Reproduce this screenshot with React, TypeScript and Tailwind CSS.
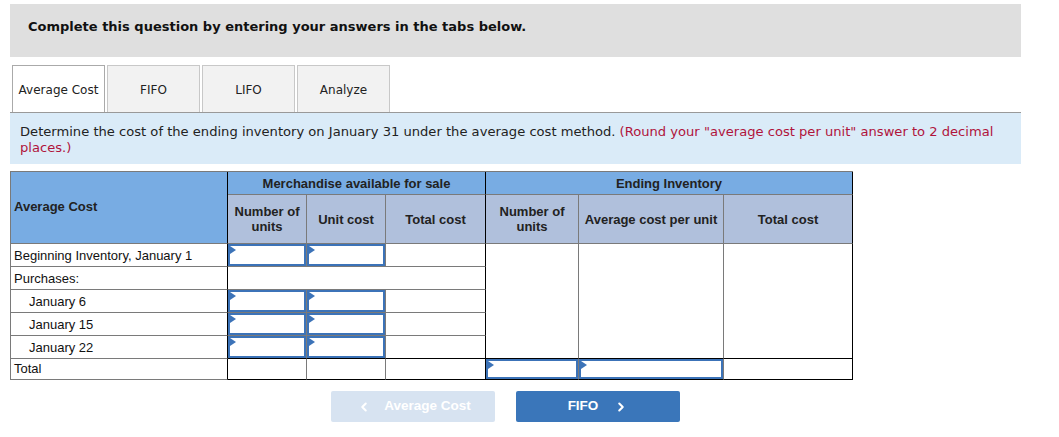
import { ChevronLeft, ChevronRight } from 'lucide-react';

const tabs = ['Average Cost', 'FIFO', 'LIFO', 'Analyze'];

const InputCell = ({ right = 'border-r-[#7a7a7a]', bottom = 'border-b-[#7a7a7a]' }: { right?: string; bottom?: string }) => (
  <div className={`border-r border-b ${right} ${bottom}`}>
    <div className="relative h-full border-2 border-[#3c73b8]">
      <svg className="absolute left-0 top-0" width="6" height="8" viewBox="0 0 6 8">
        <polygon points="0,0 6,4 0,8" fill="#3c73b8" />
      </svg>
    </div>
  </div>
);

export default function App() {
  const cell = 'border-r border-b border-[#7a7a7a]';
  const head = 'font-bold text-[#222] text-center flex items-center justify-center leading-[15px]';

  return (
    <div className="w-[1059px] h-[437px] bg-white px-[10px] pt-[4px] font-['Liberation_Sans',Arial,sans-serif]">
      {/* instructions */}
      <div className="h-[53px] w-[1011px] bg-[#dfdfdf] flex items-center pl-[18px] pb-[8px] font-['DejaVu_Sans',Verdana,sans-serif] text-[13px] font-bold text-[#111]">
        Complete this question by entering your answers in the tabs below.
      </div>

      {/* tabs */}
      <div className="mt-[8px] w-[1011px] flex gap-[2px] pl-[2px] border-b border-[#999] font-['DejaVu_Sans',Verdana,sans-serif] text-[12px] text-[#222]">
        {tabs.map((t, i) => (
          <div
            key={t}
            className={
              i === 0
                ? 'w-[93px] h-[47px] -mb-px pt-[2px] bg-white border border-b-0 border-[#aaa] flex items-center justify-center'
                : 'w-[93px] h-[47px] pt-[2px] bg-[#f2f2f2] border border-b-0 border-[#c8c8c8] flex items-center justify-center'
            }
          >
            {t}
          </div>
        ))}
      </div>

      <div className="w-[1011px] h-[51px] bg-[#daebf8] px-[10px] pt-[11px] font-['DejaVu_Sans',Verdana,sans-serif] text-[13.1px] leading-[16px] text-[#222]">
        Determine the cost of the ending inventory on January 31 under the average cost method.{' '}
        <span className="text-[#b0143c]">(Round your "average cost per unit" answer to 2 decimal places.)</span>
      </div>

      {/* table */}
      <div className="mt-[7px] w-[843px] grid grid-cols-[217px_79px_79px_100px_93px_145px_129px] grid-rows-[23px_49px_23px_23px_23px_23px_23px_21px] border-l border-t border-[#7a7a7a] text-[13px] text-[#111]">
        <div className="row-span-2 bg-[#78ace3] border-r border-b border-[#7a7a7a] border-r-black flex items-center pl-[3px] pb-[2px] font-bold text-[#222]">
          Average Cost
        </div>
        <div className={`col-span-3 bg-[#78ace3] ${cell} border-r-black ${head}`}>Merchandise available for sale</div>
        <div className={`col-span-3 bg-[#78ace3] ${cell} border-r-black ${head}`}>Ending Inventory</div>

        <div className={`bg-[#b0c0dc] ${cell} ${head}`}>Number of<br />units</div>
        <div className={`bg-[#b0c0dc] ${cell} ${head}`}>Unit cost</div>
        <div className={`bg-[#b0c0dc] ${cell} border-r-black ${head}`}>Total cost</div>
        <div className={`bg-[#b0c0dc] ${cell} ${head}`}>Number of<br />units</div>
        <div className={`bg-[#b0c0dc] ${cell} ${head}`}>Average cost per unit</div>
        <div className={`bg-[#b0c0dc] ${cell} border-r-black ${head}`}>Total cost</div>

        {/* Beginning inventory */}
        <div className={`${cell} border-r-black flex items-center pl-[3px] pt-[1px]`}>Beginning Inventory, January 1</div>
        <InputCell />
        <InputCell />
        <div className={`${cell} border-r-black`} />
        <div className={`row-span-5 ${cell} border-b-black`} />
        <div className={`row-span-5 ${cell} border-b-black`} />
        <div className={`row-span-5 ${cell} border-r-black border-b-black`} />

        {/* Purchases */}
        <div className={`${cell} border-r-black flex items-center pl-[3px] pt-[1px]`}>Purchases:</div>
        <div className={`col-span-3 ${cell} border-r-black`} />

        {['January 6', 'January 15', 'January 22'].map((d, i) => (
          <>
            <div key={d} className={`${cell} border-r-black flex items-center pl-[18px] pt-[1px]`}>{d}</div>
            <InputCell bottom={i === 2 ? 'border-b-black' : 'border-b-[#7a7a7a]'} />
            <InputCell bottom={i === 2 ? 'border-b-black' : 'border-b-[#7a7a7a]'} />
            <div className={`${cell} border-r-black ${i === 2 ? 'border-b-black' : ''}`} />
          </>
        ))}

        {/* Total */}
        <div className={`${cell} border-r-black flex items-center pl-[3px]`}>Total</div>
        <div className={`${cell} border-b-black`} />
        <div className={`${cell} border-b-black`} />
        <div className={`${cell} border-r-black border-b-black`} />
        <InputCell bottom="border-b-black" />
        <InputCell bottom="border-b-black" />
        <div className={`${cell} border-r-black border-b-black`} />
      </div>

      {/* navigation */}
      <div className="mt-[11px] ml-[321px] flex gap-[21px] text-[13.5px] font-bold text-white">
        <button className="w-[164px] h-[31px] rounded-[2px] bg-[#d7e3f1] flex items-center justify-center gap-[13px] pl-[2px]">
          <ChevronLeft size={14} strokeWidth={3.5} />
          <span>Average Cost</span>
        </button>
        <button className="w-[164px] h-[31px] rounded-[2px] bg-[#3a76ba] flex items-center justify-center gap-[16px]">
          <span>FIFO</span>
          <ChevronRight size={14} strokeWidth={3.5} />
        </button>
      </div>
    </div>
  );
}
